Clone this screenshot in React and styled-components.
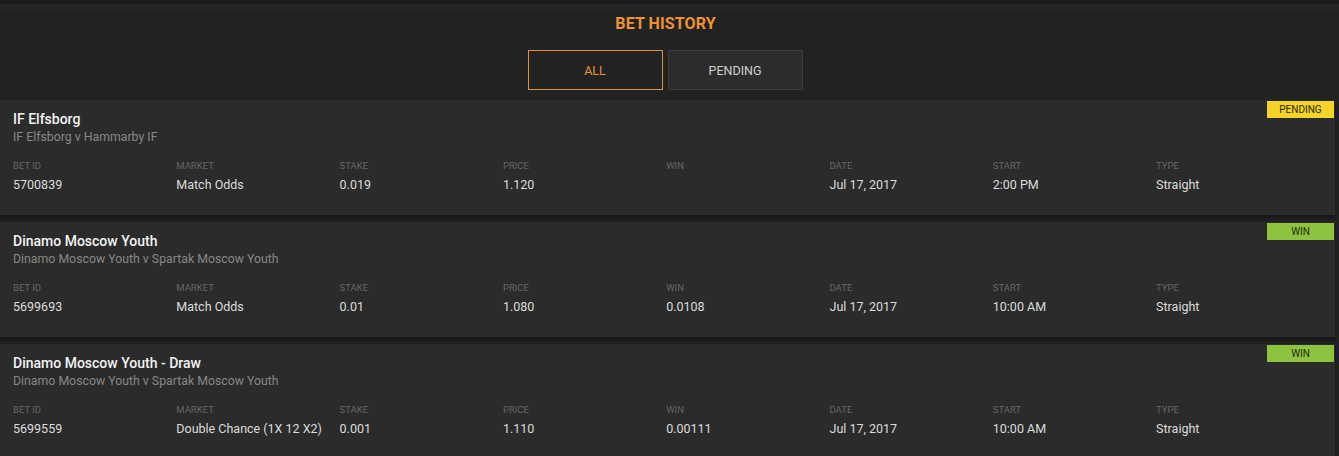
import styled, { createGlobalStyle } from "styled-components";

const GlobalStyle = createGlobalStyle`
  html, body {
    margin: 0;
    padding: 0;
    background: #222222;
    font-family: Roboto, "Noto Sans", Arial, sans-serif;
  }
  * { box-sizing: border-box; }
`;

const bets = [
  {
    title: "IF Elfsborg",
    event: "IF Elfsborg v Hammarby IF",
    status: "PENDING",
    id: "5700839",
    market: "Match Odds",
    stake: "0.019",
    price: "1.120",
    win: "",
    date: "Jul 17, 2017",
    start: "2:00 PM",
    type: "Straight",
  },
  {
    title: "Dinamo Moscow Youth",
    event: "Dinamo Moscow Youth v Spartak Moscow Youth",
    status: "WIN",
    id: "5699693",
    market: "Match Odds",
    stake: "0.01",
    price: "1.080",
    win: "0.0108",
    date: "Jul 17, 2017",
    start: "10:00 AM",
    type: "Straight",
  },
  {
    title: "Dinamo Moscow Youth - Draw",
    event: "Dinamo Moscow Youth v Spartak Moscow Youth",
    status: "WIN",
    id: "5699559",
    market: "Double Chance (1X 12 X2)",
    stake: "0.001",
    price: "1.110",
    win: "0.00111",
    date: "Jul 17, 2017",
    start: "10:00 AM",
    type: "Straight",
  },
];

const columns = [
  ["BET ID", "id"],
  ["MARKET", "market"],
  ["STAKE", "stake"],
  ["PRICE", "price"],
  ["WIN", "win"],
  ["DATE", "date"],
  ["START", "start"],
  ["TYPE", "type"],
];

const Page = styled.div`
  width: 1339px;
  height: 456px;
  overflow: hidden;
  background: #222222;
  border-top: 4px solid #1a1a1a;
`;

const Header = styled.div`
  display: flex;
  flex-direction: column;
  align-items: center;
  padding-top: 10px;
  background: linear-gradient(#272727, #222222 10px);
`;

const Title = styled.h1`
  margin: 0;
  font-size: 16px;
  line-height: 20px;
  font-weight: 700;
  color: #f0922f;
  letter-spacing: 0.1px;
  padding-right: 8px;
`;

const Tabs = styled.div`
  display: flex;
  gap: 5px;
  margin: 16px 0 10px;
  padding-right: 9px;
`;

const Tab = styled.button`
  width: 135px;
  height: 40px;
  font-family: inherit;
  font-size: 12.5px;
  text-transform: uppercase;
  cursor: pointer;
  color: ${(p) => (p.$active ? "#e8923a" : "#cfcfcf")};
  background: ${(p) => (p.$active ? "#222222" : "#2c2c2c")};
  border: 1px solid ${(p) => (p.$active ? "#e0913b" : "#3b3b3b")};
`;

const List = styled.div`
  display: flex;
  flex-direction: column;
  gap: 7px;
  width: 1335px;
`;

const Card = styled.div`
  position: relative;
  height: 115px;
  padding: 10px 13px 0;
  background: #2b2b2b;
  box-shadow: 0 3px 3px rgba(0, 0, 0, 0.35);
`;

const Badge = styled.span`
  position: absolute;
  top: 1px;
  right: 1px;
  width: 67px;
  height: 17px;
  line-height: 17px;
  text-align: center;
  font-size: 10px;
  color: #2a2a10;
  background: ${(p) => (p.$status === "WIN" ? "#8cc43f" : "#f5d327")};
`;

const Name = styled.div`
  font-size: 14px;
  line-height: 18px;
  font-weight: 500;
  color: #f2f2f2;
`;

const Event = styled.div`
  font-size: 12.3px;
  line-height: 18px;
  color: #878787;
`;

const Grid = styled.div`
  display: grid;
  grid-template-columns: repeat(8, 163.3px);
  margin-top: 14px;
`;

const Label = styled.div`
  font-size: 9.5px;
  line-height: 12px;
  color: #666666;
  text-transform: uppercase;
`;

const Value = styled.div`
  margin-top: 4px;
  font-size: 12.5px;
  line-height: 18px;
  color: #dcdcdc;
  white-space: nowrap;
`;

export default function App() {
  return (
    <Page>
      <GlobalStyle />
      <Header>
        <Title>BET HISTORY</Title>
        <Tabs>
          <Tab $active>All</Tab>
          <Tab>Pending</Tab>
        </Tabs>
      </Header>
      <List>
        {bets.map((bet) => (
          <Card key={bet.id}>
            <Badge $status={bet.status}>{bet.status}</Badge>
            <Name>{bet.title}</Name>
            <Event>{bet.event}</Event>
            <Grid>
              {columns.map(([label, key]) => (
                <div key={key}>
                  <Label>{label}</Label>
                  <Value>{bet[key] || "\u00a0"}</Value>
                </div>
              ))}
            </Grid>
          </Card>
        ))}
      </List>
    </Page>
  );
}
